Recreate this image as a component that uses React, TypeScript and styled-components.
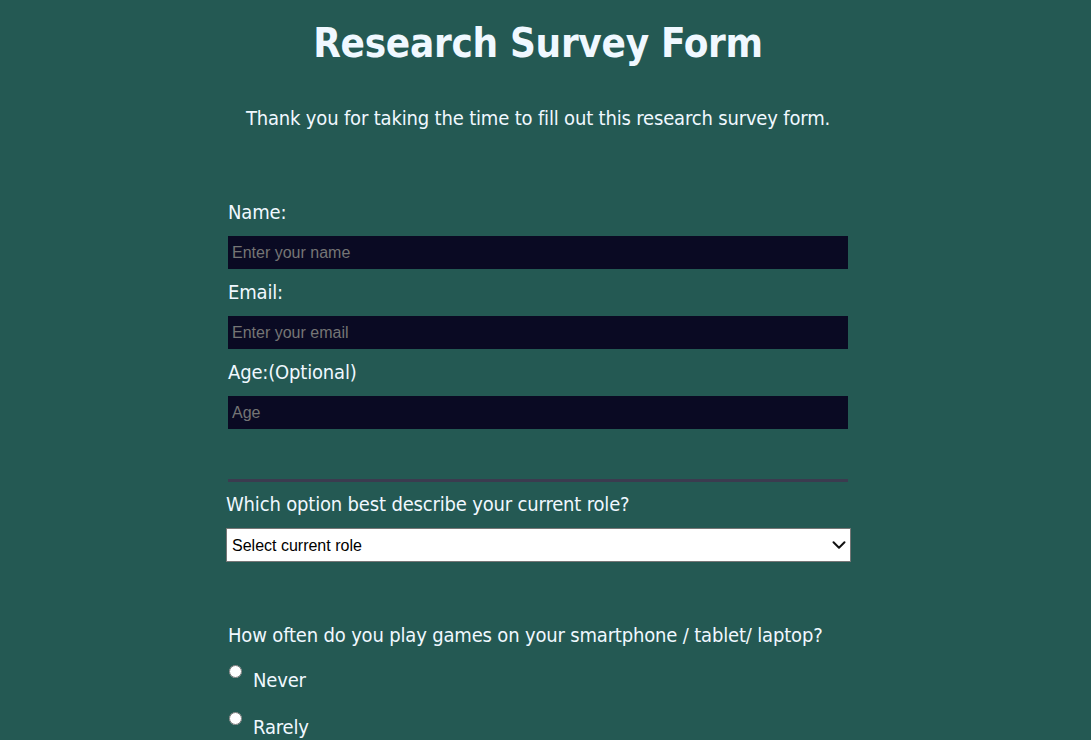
import React from "react";
import styled, { createGlobalStyle } from "styled-components";
import { ChevronDown } from "lucide-react";

const GlobalStyle = createGlobalStyle`
  html, body {
    margin: 0;
    padding: 0;
    background: #245953;
    overflow: hidden;
  }
  body {
    color: #f0f8ff;
    font-family: Tahoma, "DejaVu Sans Condensed", sans-serif;
    letter-spacing: -0.17px;
  }
  * { box-sizing: border-box; }
`;

const Page = styled.div`
  padding-right: 15px;
  min-height: 740px;
`;

const Title = styled.h1`
  margin: 19px 0 0;
  font-size: 40px;
  line-height: 48px;
  font-weight: bold;
  letter-spacing: -0.3px;
  text-align: center;
`;

const Description = styled.p`
  margin: 39px 0 0;
  font-size: 20px;
  line-height: 24px;
  text-align: center;
`;

const Form = styled.form`
  width: 620px;
  margin: 70px auto 0;
`;

const Section = styled.fieldset`
  border: none;
  border-bottom: 3px solid #3b3b4f;
  margin: 0;
  padding: 0 0 39px;
`;

const Label = styled.label`
  display: block;
  font-size: 20px;
  line-height: 24px;
`;

const TextInput = styled.input`
  display: block;
  width: 100%;
  height: 33px;
  margin: 12px 0 11px;
  padding: 0 3px;
  background: #0a0a23;
  border: 1px solid #0a0a23;
  color: #ffffff;
  font-family: Arial, "Liberation Sans", sans-serif;
  font-size: 16px;
  letter-spacing: 0;
  &::placeholder {
    color: #757575;
  }
`;

const RoleBlock = styled.div`
  margin: 10px -3px 0 -2px;
`;

const Question = styled.p`
  margin: 0;
  font-size: 20px;
  line-height: 24px;
`;

const SelectWrap = styled.div`
  position: relative;
  margin-top: 12px;
`;

const Select = styled.select`
  display: block;
  width: 100%;
  height: 34px;
  padding: 0 26px 0 5px;
  appearance: none;
  background: #ffffff;
  color: #000000;
  border: 1px solid #767676;
  border-radius: 0;
  font-family: Arial, "Liberation Sans", sans-serif;
  font-size: 16px;
  letter-spacing: 0;
`;

const SelectArrow = styled.span`
  position: absolute;
  right: 1px;
  top: 6px;
  display: flex;
  pointer-events: none;
  color: #111111;
`;

const FrequencyBlock = styled.div`
  margin-top: 61px;
`;

const Options = styled.div`
  display: flex;
  flex-direction: column;
  gap: 12px;
  margin-top: 10px;
`;

const OptionRow = styled.label`
  display: flex;
  align-items: flex-start;
  font-size: 20px;
  line-height: 24px;
`;

const Radio = styled.input`
  width: 13px;
  height: 13px;
  margin: 8px 11px 0 1px;
`;

const OptionText = styled.span`
  margin-top: 11px;
`;

const frequencies = ["Never", "Rarely", "Sometimes", "Often"];

export default function App() {
  return (
    <>
      <GlobalStyle />
      <Page>
        <Title>Research Survey Form</Title>
        <Description>
          Thank you for taking the time to fill out this research survey form.
        </Description>
        <Form>
          <Section>
            <Label htmlFor="name">Name:</Label>
            <TextInput id="name" type="text" placeholder="Enter your name" />
            <Label htmlFor="email">Email:</Label>
            <TextInput id="email" type="email" placeholder="Enter your email" />
            <Label htmlFor="age">Age:(Optional)</Label>
            <TextInput id="age" type="number" placeholder="Age" />
          </Section>
          <RoleBlock>
            <Question>Which option best describe your current role?</Question>
            <SelectWrap>
              <Select defaultValue="">
                <option value="" disabled>
                  Select current role
                </option>
                <option value="student">Student</option>
                <option value="full-time">Full Time Job</option>
                <option value="learner">Full Time Learner</option>
                <option value="other">Other</option>
              </Select>
              <SelectArrow>
                <ChevronDown size={22} strokeWidth={2.2} />
              </SelectArrow>
            </SelectWrap>
          </RoleBlock>
          <FrequencyBlock>
            <Question>How often do you play games on your smartphone / tablet/ laptop?</Question>
            <Options>
              {frequencies.map((f) => (
                <OptionRow key={f}>
                  <Radio type="radio" name="frequency" value={f.toLowerCase()} />
                  <OptionText>{f}</OptionText>
                </OptionRow>
              ))}
            </Options>
          </FrequencyBlock>
        </Form>
      </Page>
    </>
  );
}
